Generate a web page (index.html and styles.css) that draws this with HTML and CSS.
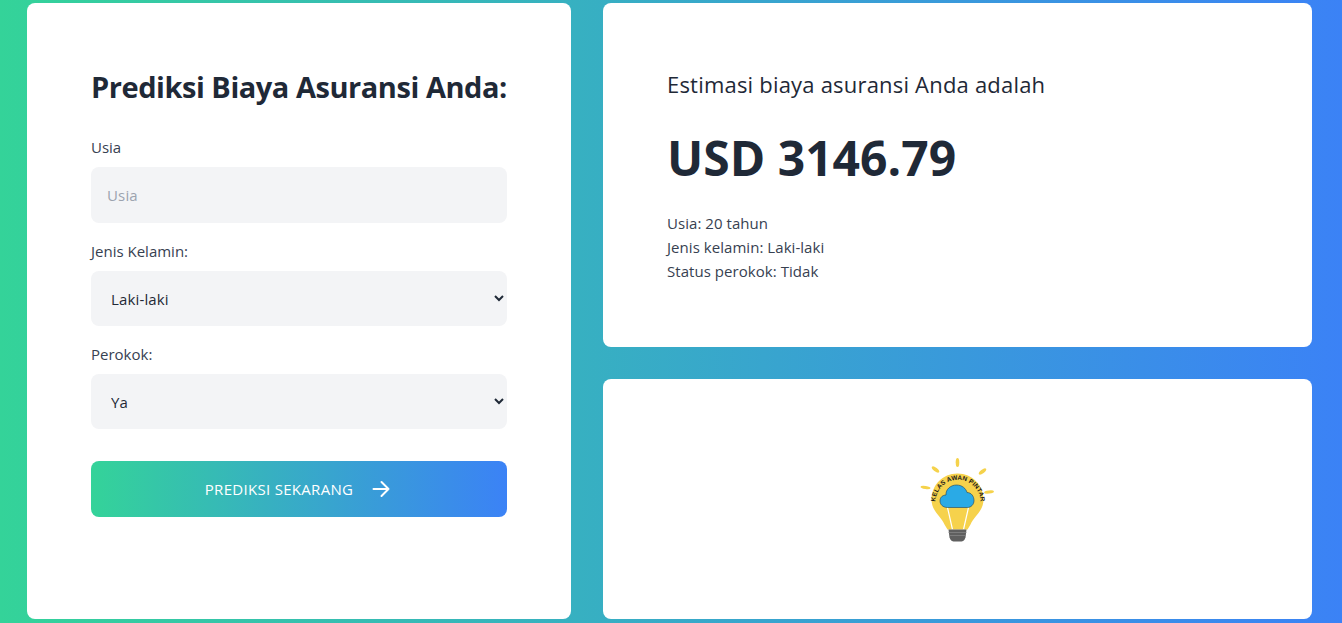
FILE: index.html
```html
<!DOCTYPE html>
<html lang="en">
<head>
    <meta charset="UTF-8">
    <meta name="viewport" content="width=device-width, initial-scale=1.0">
    <title>Prediksi Biaya Asuransi</title>
    <link rel="stylesheet" href="styles.css">
</head>
<body>

    <main class="layout">
        <!-- Form -->
        <section class="card form-card">
            <h1 class="form-title">Prediksi Biaya Asuransi Anda:</h1>
            <form class="form">
                <label class="field-label" for="usia">Usia</label>
                <input class="field" id="usia" type="text" placeholder="Usia">

                <label class="field-label" for="gender">Jenis Kelamin:</label>
                <select class="field field-select" id="gender">
                    <option>Laki-laki</option>
                    <option>Perempuan</option>
                </select>

                <label class="field-label" for="smoker">Perokok:</label>
                <select class="field field-select" id="smoker">
                    <option>Ya</option>
                    <option>Tidak</option>
                </select>

                <button class="submit" type="button">
                    <span>PREDIKSI SEKARANG</span>
                    <svg class="submit-arrow" viewBox="0 0 18 18" width="18" height="18" fill="none" stroke="#fff" stroke-width="2" stroke-linecap="round" stroke-linejoin="round">
                        <path d="M1.5 9H16.5M9.5 2L16.5 9L9.5 16"/>
                    </svg>
                </button>
            </form>
        </section>

        <!-- Hasil -->
        <div class="side">
            <section class="card result-card">
                <p class="result-lead">Estimasi biaya asuransi Anda adalah</p>
                <p class="result-value">USD 3146.79</p>
                <p class="result-row">Usia: 20 tahun</p>
                <p class="result-row">Jenis kelamin: Laki-laki</p>
                <p class="result-row">Status perokok: Tidak</p>
            </section>

            <section class="card logo-card">
                <svg class="logo" viewBox="2.5 1.500 110 105" width="110" height="105">
                    <g fill="#f5d24b">
                        <ellipse cx="57" cy="17" rx="1.800" ry="4.500"/>
                        <ellipse cx="35" cy="24" rx="1.800" ry="4.500" transform="rotate(-52 35 24)"/>
                        <ellipse cx="82" cy="26" rx="1.800" ry="4.500" transform="rotate(52 82 26)"/>
                        <ellipse cx="25" cy="42" rx="1.600" ry="5" transform="rotate(-82 25 42)"/>
                        <ellipse cx="88.500" cy="46.500" rx="1.600" ry="5" transform="rotate(84 88.500 46.500)"/>
                    </g>
                    <path d="M57 28C42 28 31 40 31 54C31 66 41 71 44 79L47 84H67L70 79C73 71 83 66 83 54C83 40 72 28 57 28Z" fill="#f6d24c"/>
                    <path d="M47 62L52 84M68 62L63 84" stroke="#fff" stroke-width="1.200" fill="none"/>
                    <path d="M47 62C42 62 39.500 58.500 39.500 55.500C39.500 51.500 42.500 49.500 45.500 49.500C45 44 50 39.500 56 39.500C61.500 39.500 65.500 43 66.500 47C71 47 73.500 51 73.500 55C73.500 59 70.500 62 67 62Z" fill="#2aaae6" stroke="#1c3f5c" stroke-width="0.6"/>
                    <path id="logo-arc" d="M35.600 62A22.500 22.500 0 1 1 79.400 62" fill="none"/>
                    <text class="logo-text"><textPath href="#logo-arc" startOffset="50%" text-anchor="middle">KELAS AWAN PINTAR</textPath></text>
                    <path d="M48 84H66L65 92C64 95 62 96 61 96H53C52 96 50 95 49 92Z" fill="#5f5f5f"/>
                    <path d="M48 87H66M49 90H65" stroke="#8b8b8b" stroke-width="0.7"/>
                </svg>
            </section>
        </div>
    </main>

</body>
</html>
```

FILE: styles.css
```css
* {
    box-sizing: border-box;
}

body {
    font-family: "Open Sans", "Noto Sans", sans-serif;
    margin: 0;
    height: 623px;
    overflow: hidden;
    color: #1f2937;
    background: linear-gradient(to right, #34d399, #3b82f6);
}

.layout {
    display: grid;
    grid-template-columns: 544px 709px;
    gap: 32px;
    padding: 3px 30px 4px 27px;
    height: 100%;
}

.card {
    background-color: #fff;
    border-radius: 8px;
}

.form-card {
    padding: 66px 64px 0;
}

.form-title {
    margin: 0 0 30px;
    font-size: 29px;
    line-height: 36px;
    font-weight: 700;
    letter-spacing: -0.46px;
    white-space: nowrap;
}

.form {
    display: flex;
    flex-direction: column;
}

.field-label {
    font-size: 15px;
    line-height: 24px;
    color: #374151;
    margin-bottom: 8px;
}

.field {
    width: 100%;
    height: 56px;
    margin-bottom: 16px;
    padding: 0 16px;
    border: none;
    border-radius: 8px;
    background-color: #f3f4f6;
    font-family: inherit;
    font-size: 15px;
    letter-spacing: 0.15px;
    color: #1f2937;
}

.field::placeholder {
    color: #9ca3af;
}

.field-select {
    height: 55px;
}

.submit {
    display: flex;
    justify-content: center;
    align-items: center;
    gap: 19px;
    height: 56px;
    margin-top: 16px;
    padding: 0 3px 0 0;
    border: none;
    border-radius: 8px;
    color: #fff;
    background: linear-gradient(to right, #34d399, #3b82f6);
    font-family: inherit;
    font-size: 15px;
    letter-spacing: 0.3px;
    cursor: pointer;
}

.side {
    display: grid;
    grid-template-rows: 344px 240px;
    gap: 32px;
}

.result-card {
    padding: 65px 64px 0;
}

.result-card p {
    margin: 0;
}

.result-lead {
    font-size: 22px;
    line-height: 32px;
    letter-spacing: 0.2px;
}

.result-card .result-value {
    margin: 28px 0 23px;
    font-size: 48px;
    line-height: 60px;
    font-weight: 700;
}

.result-row {
    font-size: 15px;
    line-height: 24px;
    letter-spacing: 0.05px;
    color: #374151;
}

.logo-card {
    display: flex;
    justify-content: center;
    align-items: center;
}

.logo-text {
    font-family: "Liberation Sans", sans-serif;
    font-size: 6.4px;
    font-weight: 700;
    fill: #1a1a1a;
    letter-spacing: 0.1px;
}
```
